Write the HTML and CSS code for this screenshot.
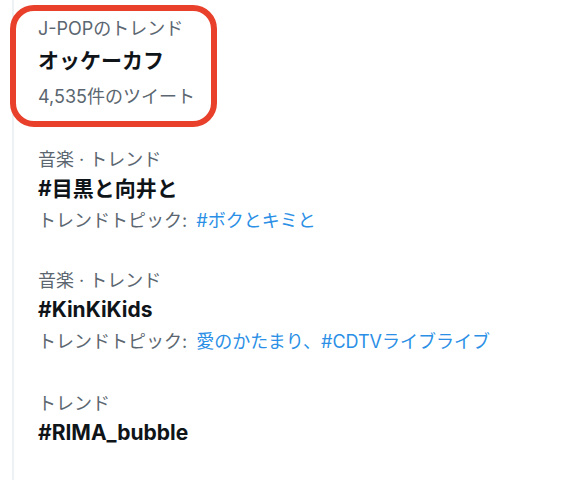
FILE: index.html
```html
<!DOCTYPE html>
<html lang="ja">
<head>
<meta charset="utf-8">
<title>トレンド</title>
<link rel="stylesheet" href="styles.css">
</head>
<body>
<div class="page">
  <div class="timeline">
    <div class="trend trend--first">
      <div class="trend__context">J-POPのトレンド</div>
      <div class="trend__name">オッケーカフ</div>
      <div class="trend__meta">4,535件のツイート</div>
    </div>
    <div class="trend">
      <div class="trend__context">音楽 · トレンド</div>
      <div class="trend__name">#目黒と向井と</div>
      <div class="trend__meta">トレンドトピック: <span class="link">#ボクとキミと</span></div>
    </div>
    <div class="trend">
      <div class="trend__context">音楽 · トレンド</div>
      <div class="trend__name">#KinKiKids</div>
      <div class="trend__meta">トレンドトピック: <span class="link">愛のかたまり、#CDTVライブライブ</span></div>
    </div>
    <div class="trend trend--last">
      <div class="trend__context">トレンド</div>
      <div class="trend__name">#RIMA_bubble</div>
    </div>
  </div>
  <div class="annotation"></div>
</div>
</body>
</html>
```
FILE: styles.css
```css
html, body {
  margin: 0;
  padding: 0;
  background: #ffffff;
}
body {
  font-family: Inter, "Noto Sans CJK JP", sans-serif;
}
.page {
  position: relative;
  height: 480px;
  overflow: hidden;
}
.timeline {
  margin-left: 12px;
  border-left: 2px solid #eef1f3;
  height: 100%;
  box-sizing: border-box;
}
.trend {
  padding: 40px 0 0 24px;
}
.trend--first {
  padding-top: 19px;
  padding-bottom: 3px;
}
.trend--last {
  padding-top: 42px;
}
.trend__context {
  font-size: 18px;
  line-height: 20px;
  color: #5b6670;
  white-space: nowrap;
}
.trend__name {
  margin-top: 7px;
  font-size: 21px;
  line-height: 24px;
  font-weight: 700;
  color: #0f1419;
  white-space: nowrap;
}
.trend--first .trend__name {
  margin-top: 10px;
}
.trend__meta {
  margin-top: 10px;
  font-size: 18px;
  line-height: 20px;
  color: #5b6670;
  white-space: nowrap;
}
.trend--first .trend__meta {
  margin-top: 14px;
}
.link {
  margin-left: 4px;
  color: #2b8fe6;
}
.annotation {
  position: absolute;
  left: 10px;
  top: 5px;
  width: 207px;
  height: 122px;
  box-sizing: border-box;
  border: 6px solid #e8402b;
  border-radius: 24px;
}
```
